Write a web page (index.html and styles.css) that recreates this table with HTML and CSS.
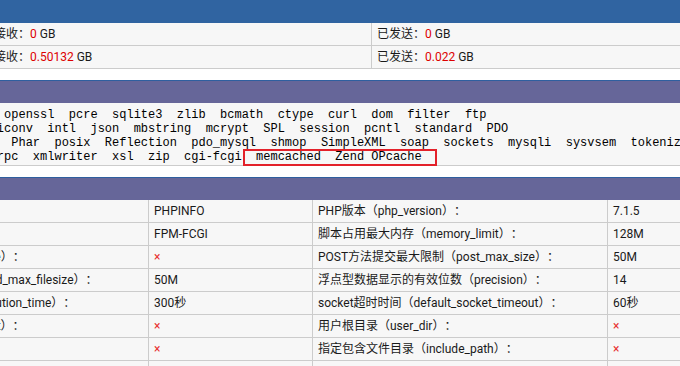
FILE: index.html
```html
<!DOCTYPE html>
<html lang="zh-CN">
<head>
<meta charset="utf-8">
<title>PHP探针</title>
<link rel="stylesheet" href="styles.css">
</head>
<body>
<div class="page">
  <div class="head head-blue">网络使用</div>
  <div class="net">
    <div class="cell">eth0 :</div>
    <div class="cell">已接收：<span class="red">0</span> GB</div>
    <div class="cell">已发送：<span class="red">0</span> GB</div>
    <div class="cell">lo :</div>
    <div class="cell">已接收：<span class="red">0.50132</span> GB</div>
    <div class="cell">已发送：<span class="red">0.022</span> GB</div>
  </div>

  <div class="head head-purple">已编译模块</div>
  <div class="ext">
    <div class="ext-line">Core  date  libxml  openssl  pcre  sqlite3  zlib  bcmath  ctype  curl  dom  filter  ftp</div>
    <div class="ext-line">gd  gettext  hash  iconv  intl  json  mbstring  mcrypt  SPL  session  pcntl  standard  PDO</div>
    <div class="ext-line">mysqlnd  pdo_sqlite  Phar  posix  Reflection  pdo_mysql  shmop  SimpleXML  soap  sockets  mysqli  sysvsem  tokenizer  xml</div>
    <div class="ext-line">xml  xmlreader  xmlrpc  xmlwriter  xsl  zip  cgi-fcgi  memcached  Zend OPcache</div>
    <div class="mark"></div>
  </div>

  <div class="head head-purple">PHP参数</div>
  <div class="params">
    <div class="cell">PHP信息（phpinfo）：</div>
    <div class="cell">PHPINFO</div>
    <div class="cell">PHP版本（php_version）：</div>
    <div class="cell">7.1.5</div>

    <div class="cell">PHP运行方式：</div>
    <div class="cell">FPM-FCGI</div>
    <div class="cell">脚本占用最大内存（memory_limit）：</div>
    <div class="cell">128M</div>

    <div class="cell">PHP安全模式（safe_mode）：</div>
    <div class="cell"><span class="no">×</span></div>
    <div class="cell">POST方法提交最大限制（post_max_size）：</div>
    <div class="cell">50M</div>

    <div class="cell">上传文件最大限制（upload_max_filesize）：</div>
    <div class="cell">50M</div>
    <div class="cell">浮点型数据显示的有效位数（precision）：</div>
    <div class="cell">14</div>

    <div class="cell">脚本超时时间（max_execution_time）：</div>
    <div class="cell">300秒</div>
    <div class="cell">socket超时时间（default_socket_timeout）：</div>
    <div class="cell">60秒</div>

    <div class="cell">PHP页面根目录（doc_root）：</div>
    <div class="cell"><span class="no">×</span></div>
    <div class="cell">用户根目录（user_dir）：</div>
    <div class="cell"><span class="no">×</span></div>

    <div class="cell">dl()函数（enable_dl）：</div>
    <div class="cell"><span class="no">×</span></div>
    <div class="cell">指定包含文件目录（include_path）：</div>
    <div class="cell"><span class="no">×</span></div>

    <div class="cell"></div>
    <div class="cell"></div>
    <div class="cell"></div>
    <div class="cell"></div>
  </div>
</div>
</body>
</html>
```

FILE: styles.css
```css
html, body {
  margin: 0;
  padding: 0;
  overflow: hidden;
  background: #ffffff;
}

body {
  font-family: Roboto, "Noto Sans CJK SC", sans-serif;
  font-size: 12px;
  color: #1a1a1a;
  text-spacing-trim: space-all;
}

.page {
  width: 918px;
  margin-left: -147px;
}

.head {
  height: 22px;
  line-height: 22px;
  padding-left: 6px;
  color: #ffffff;
  font-weight: bold;
}

.head-blue {
  height: 23px;
  line-height: 23px;
  background: #3064a1;
}

.head-purple {
  border-top: 1px solid #2f5f9f;
  background: #666699;
}

.net {
  display: grid;
  grid-template-columns: 123px 395px 400px;
  margin-bottom: 11px;
}

.params {
  display: grid;
  grid-template-columns: 295px 164px 295px 164px;
}

.cell {
  height: 22px;
  line-height: 22px;
  padding-left: 5px;
  background: #f7f7f7;
  border-bottom: 1px solid #cccccc;
  white-space: nowrap;
  overflow: hidden;
}

.net .cell:not(:nth-child(3n+1)),
.params .cell:not(:nth-child(4n+1)) {
  border-left: 1px solid #cccccc;
}

.red {
  color: #dd0000;
}

.no {
  color: #e83030;
}

.ext {
  position: relative;
  background: #f7f7f7;
  border-bottom: 1px solid #cccccc;
  padding: 5px 0 1px 7px;
  margin-bottom: 11px;
  font-family: "Liberation Mono", monospace;
  font-size: 12px;
  line-height: 14px;
  color: #000000;
}

.ext-line {
  height: 14px;
  white-space: pre;
}

.mark {
  position: absolute;
  left: 390px;
  top: 46px;
  width: 194px;
  height: 17px;
  box-sizing: border-box;
  border: 2px solid #e3212a;
}
```
